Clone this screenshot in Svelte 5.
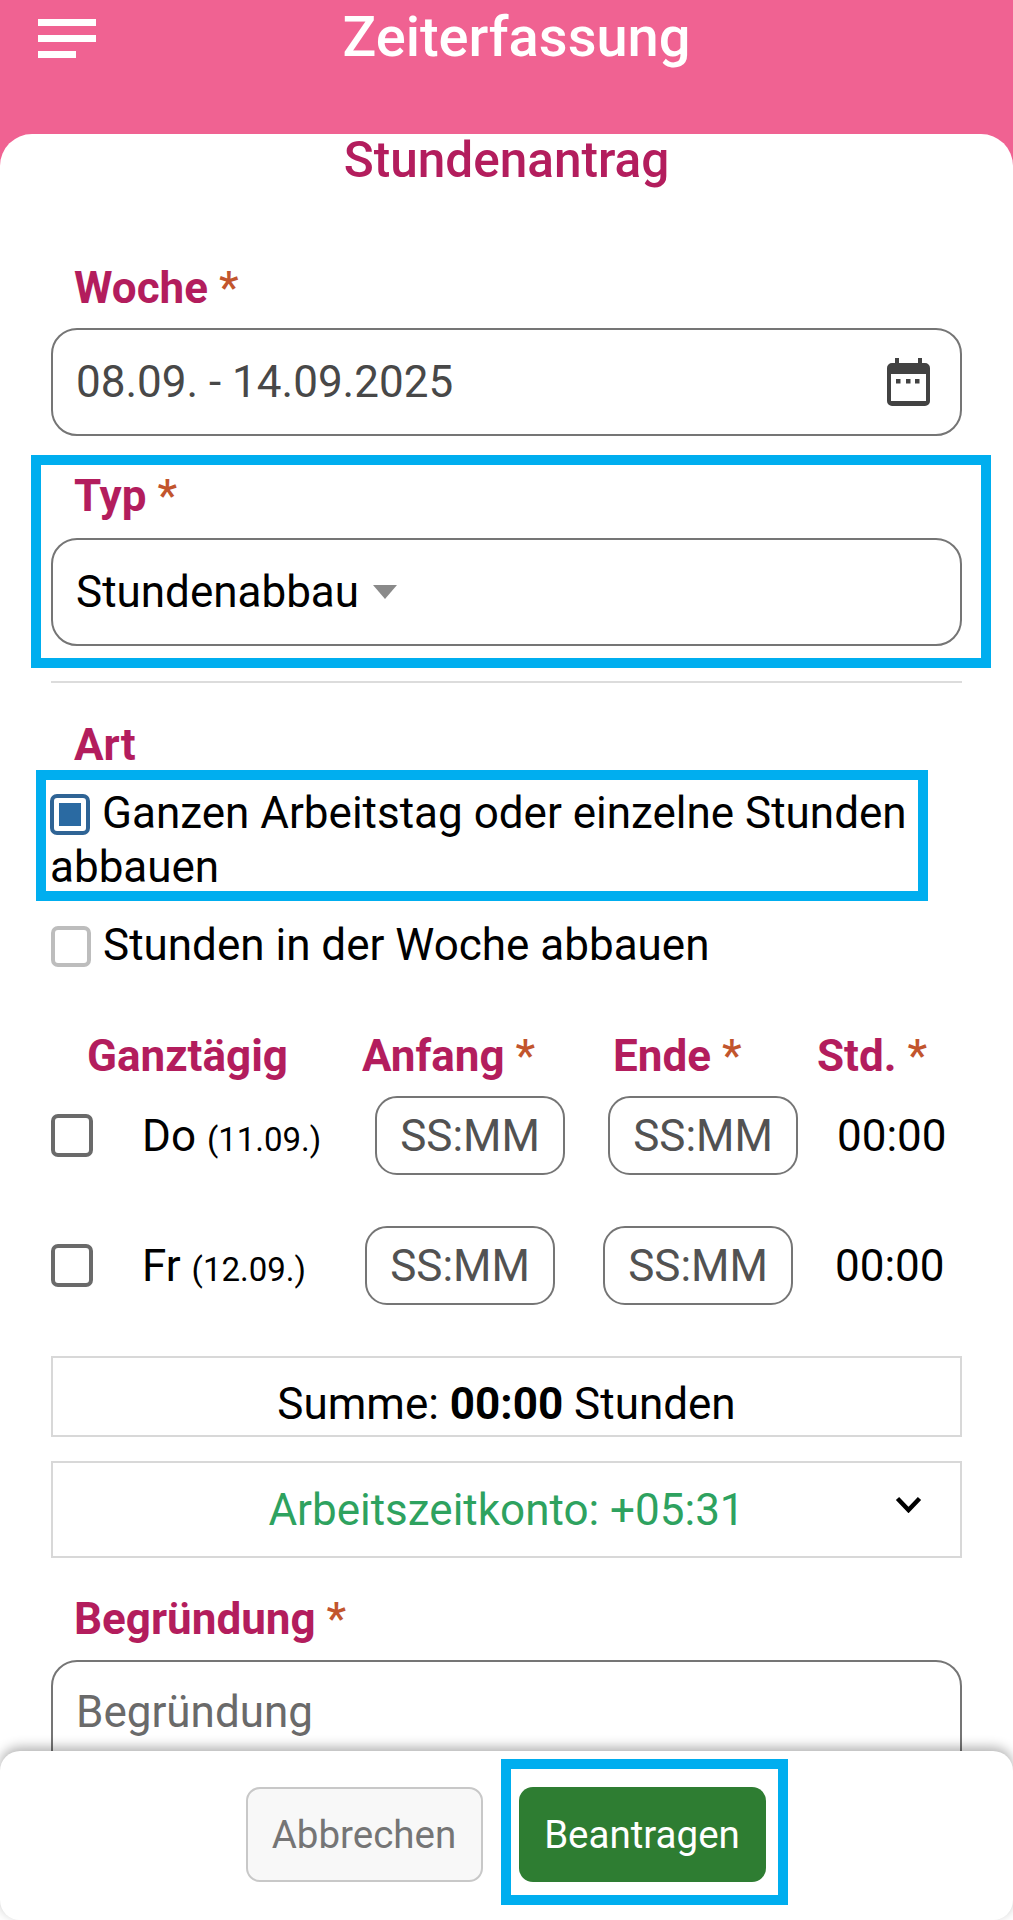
<script>
    // Rows of the per-day table; the offset differs a little from row to row
    const days = [
        { name: "Do", date: "(11.09.)", cls: "first" },
        { name: "Fr", date: "(12.09.)", cls: "second" }
    ];
</script>

<style>
    :global(body) {
        margin: 0;
        background: #f06292;
    }

    .page {
        position: relative;
        height: 1920px;
        overflow: hidden;
        display: flex;
        flex-direction: column;
        font-family: Roboto, "Liberation Sans", sans-serif;
        font-size: 44px;
        color: #000;
        background: #f06292;
    }

    .header {
        flex: none;
        height: 134px;
        box-sizing: border-box;
        padding-left: 20px;
        display: flex;
        justify-content: center;
        position: relative;
    }

    .menu {
        position: absolute;
        left: 38px;
        top: 19px;
    }

    .header h1 {
        margin: 7px 0 0;
        font-size: 56px;
        line-height: 60px;
        font-weight: 500;
        color: #fff;
    }

    .card {
        flex: 1;
        min-height: 0;
        box-sizing: border-box;
        background: #fff;
        border-radius: 32px 32px 0 0;
        padding: 0 51px;
    }

    .card h2 {
        margin: 0;
        text-align: center;
        font-size: 49.5px;
        line-height: 50px;
        font-weight: 500;
        color: #b31d5d;
        padding-top: 1px;
    }

    .label {
        font-size: 44px;
        line-height: 50px;
        font-weight: 700;
        color: #b31d5d;
        padding-left: 23px;
    }

    .req {
        color: #c2552d;
        font-weight: 500;
    }

    .week-label {
        margin-top: 78px;
    }

    .field {
        height: 108px;
        box-sizing: border-box;
        border: 2px solid #757575;
        border-radius: 26px;
        padding: 0 30px 0 23px;
        display: flex;
        align-items: center;
        justify-content: space-between;
        color: #484848;
    }

    .week-field {
        margin-top: 15px;
    }

    .mark {
        border: 10px solid #00aeef;
        box-sizing: border-box;
    }

    .type-mark {
        margin: 19px -29px 0 -20px;
        height: 213px;
        padding: 0 19px 0 10px;
    }

    .type-mark .label {
        padding-top: 6px;
    }

    .type-field {
        margin-top: 17px;
        justify-content: flex-start;
        color: #000;
    }

    .caret {
        width: 0;
        height: 0;
        margin-left: 14px;
        border-left: 12px solid transparent;
        border-right: 12px solid transparent;
        border-top: 14px solid #8a8a8a;
    }

    .card hr {
        margin: 13px 0 0;
        border: 0;
        border-top: 2px solid #dcdcdc;
    }

    .art-label {
        margin-top: 37px;
    }

    .art-mark {
        margin: 0 34px 0 -15px;
        height: 131px;
        padding: 6px 0 0 4px;
        line-height: 54px;
    }

    .box {
        display: inline-block;
        box-sizing: border-box;
        width: 40px;
        height: 41px;
        border-radius: 7px;
        vertical-align: -7px;
        margin-right: 12px;
        border: 4px solid #bdbdbd;
    }

    .box.on {
        border-color: #2f6495;
        position: relative;
    }

    .box.on::after {
        content: "";
        position: absolute;
        inset: 5px;
        background: #2a6aa2;
    }

    .option {
        margin-top: 17px;
        line-height: 54px;
    }

    .table-head {
        display: grid;
        grid-template-columns: 275px 251px 204px 1fr;
        margin-top: 59px;
        font-weight: 700;
        padding-left: 36px;
        line-height: 50px;
        color: #b31d5d;
    }

    .day {
        display: flex;
        align-items: center;
        height: 79px;
    }

    .day.first {
        margin-top: 15px;
    }

    .day.second {
        margin-top: 51px;
    }

    .day .box {
        flex: none;
        width: 42px;
        height: 43px;
        margin: 0;
        border-color: #6a6a6a;
    }

    .day-name {
        flex: none;
        margin-left: 49px;
        white-space: nowrap;
    }

    .first .day-name {
        width: 233px;
    }

    .second .day-name {
        width: 223px;
    }

    .day-name small {
        font-size: 33px;
    }

    .time {
        flex: none;
        width: 190px;
        height: 79px;
        box-sizing: border-box;
        border: 2px solid #757575;
        border-radius: 22px;
        display: flex;
        align-items: center;
        justify-content: center;
        color: #525252;
    }

    .first .end {
        margin-left: 43px;
    }

    .second .end {
        margin-left: 48px;
    }

    .hours {
        margin-left: 39px;
    }

    .second .hours {
        margin-left: 42px;
    }

    .sum {
        margin-top: 51px;
        height: 81px;
        box-sizing: border-box;
        padding-top: 14px;
        border: 2px solid #d8d8d8;
        display: flex;
        align-items: center;
        justify-content: center;
    }

    .account {
        position: relative;
        margin-top: 24px;
        height: 97px;
        box-sizing: border-box;
        border: 2px solid #d8d8d8;
        display: flex;
        align-items: center;
        justify-content: center;
        color: #2ea25f;
    }

    .chevron {
        position: absolute;
        right: 38px;
        top: 33px;
    }

    .reason-label {
        margin-top: 36px;
    }

    .reason {
        margin-top: 16px;
        height: 200px;
        box-sizing: border-box;
        border: 2px solid #757575;
        border-radius: 26px;
        padding: 25px 23px;
        color: #6a6a6a;
        line-height: 50px;
    }

    .footer {
        position: absolute;
        left: 0;
        right: 0;
        bottom: 0;
        height: 169px;
        box-sizing: border-box;
        background: #fff;
        border-radius: 20px;
        box-shadow: 0 -4px 12px rgba(0, 0, 0, 0.3);
        display: flex;
        justify-content: center;
        padding: 36px 0 0 20px;
    }

    .btn {
        height: 95px;
        box-sizing: border-box;
        border-radius: 14px;
        font-family: inherit;
        font-size: 38.5px;
        padding: 0;
    }

    .cancel {
        width: 237px;
        background: #f8f8f8;
        border: 2px solid #c8c8c8;
        color: #757575;
    }

    .submit-mark {
        border: 10px solid #00aeef;
        box-sizing: border-box;
        width: 287px;
        height: 146px;
        margin: -28px 0 0 18px;
        padding: 18px 12px 0 8px;
    }

    .submit {
        width: 247px;
        background: #2e7d32;
        border: 0;
        color: #fff;
    }
</style>

<div class="page">
    <header class="header">
        <svg class="menu" width="58" height="39" viewBox="0 0 58 39">
            <rect x="0" y="0" width="58" height="7" fill="#fff" />
            <rect x="0" y="16" width="58" height="7" fill="#fff" />
            <rect x="0" y="32" width="38" height="7" fill="#fff" />
        </svg>
        <h1>Zeiterfassung</h1>
    </header>

    <main class="card">
        <h2>Stundenantrag</h2>

        <div class="label week-label">Woche <span class="req">*</span></div>
        <div class="field week-field">
            <span>08.09. - 14.09.2025</span>
            <svg width="43" height="48" viewBox="0 0 43 48">
                <path fill="#424242" d="M8 0h4v5h19V0h4v5h3a5 5 0 0 1 5 5v33a5 5 0 0 1-5 5H5a5 5 0 0 1-5-5V10a5 5 0 0 1 5-5h3z" />
                <rect x="4" y="16" width="35" height="27" fill="#fff" />
                <rect x="9" y="21" width="4.5" height="4.5" fill="#424242" />
                <rect x="19" y="21" width="4.5" height="4.5" fill="#424242" />
                <rect x="28" y="21" width="4.5" height="4.5" fill="#424242" />
            </svg>
        </div>

        <div class="mark type-mark">
            <div class="label">Typ <span class="req">*</span></div>
            <div class="field type-field">
                <span>Stundenabbau</span>
                <span class="caret"></span>
            </div>
        </div>

        <hr />

        <div class="label art-label">Art</div>
        <div class="mark art-mark">
            <span class="box on"></span>Ganzen Arbeitstag oder einzelne Stunden abbauen
        </div>
        <div class="option"><span class="box"></span>Stunden in der Woche abbauen</div>

        <div class="table-head">
            <span>Ganztägig</span>
            <span>Anfang <span class="req">*</span></span>
            <span>Ende <span class="req">*</span></span>
            <span>Std. <span class="req">*</span></span>
        </div>

        {#each days as day}
            <div class="day {day.cls}">
                <span class="box"></span>
                <span class="day-name">{day.name} <small>{day.date}</small></span>
                <span class="time start">SS:MM</span>
                <span class="time end">SS:MM</span>
                <span class="hours">00:00</span>
            </div>
        {/each}

        <div class="sum"><span>Summe: <b>00:00</b> Stunden</span></div>
        <div class="account">
            <span>Arbeitszeitkonto: +05:31</span>
            <svg class="chevron" width="27" height="17" viewBox="0 0 27 17">
                <path d="M2.5 2.5L13.5 14L24.5 2.5" fill="none" stroke="#000" stroke-width="4.5" />
            </svg>
        </div>

        <div class="label reason-label">Begründung <span class="req">*</span></div>
        <div class="reason">Begründung</div>
    </main>

    <footer class="footer">
        <button class="btn cancel">Abbrechen</button>
        <div class="submit-mark">
            <button class="btn submit">Beantragen</button>
        </div>
    </footer>
</div>
